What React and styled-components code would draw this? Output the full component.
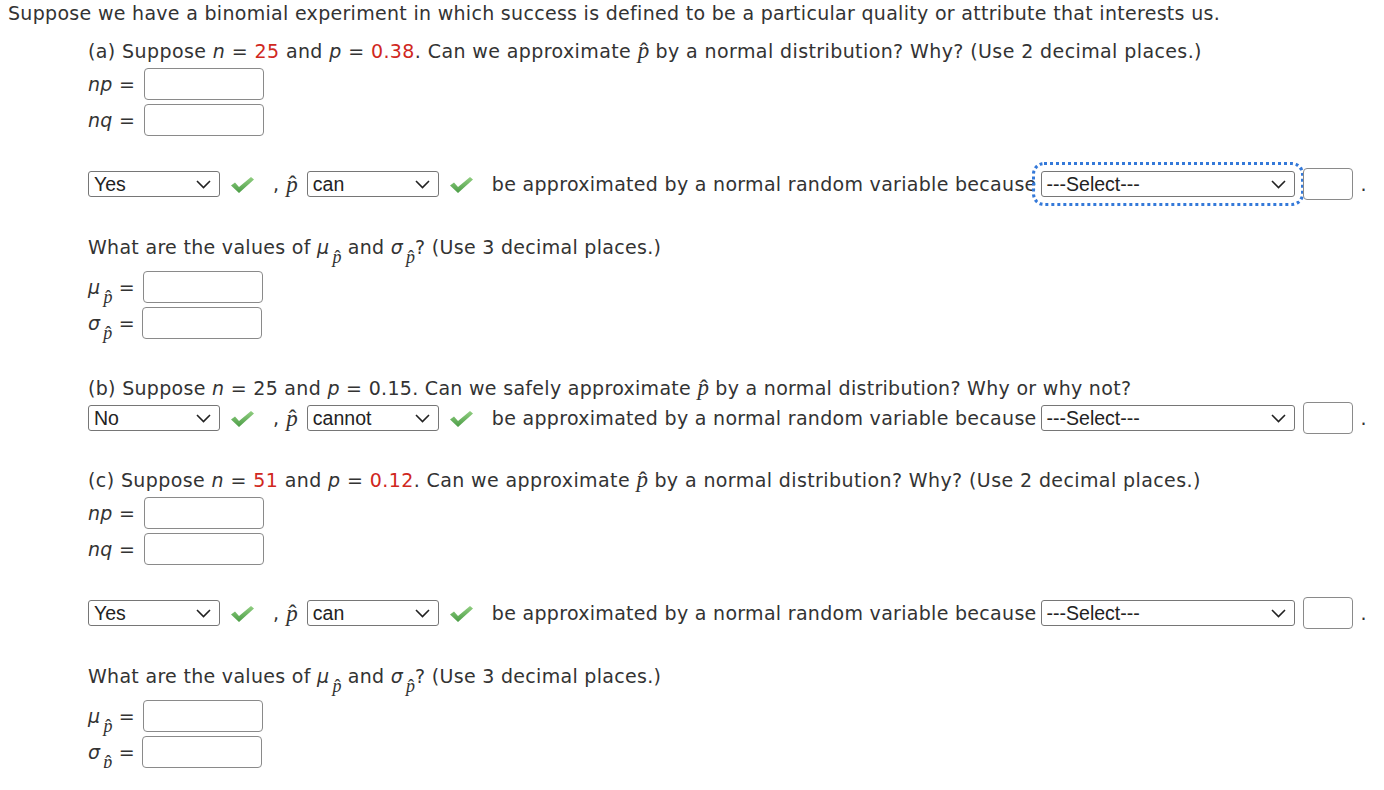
import React from 'react'
import styled, { createGlobalStyle } from 'styled-components'

const Global = createGlobalStyle`
  html, body { margin: 0; padding: 0; background: #fff; }
  body {
    font-family: "DejaVu Sans", Verdana, sans-serif;
    font-size: 19px;
    letter-spacing: 0.3px;
    color: #333;
  }
`;

const Page = styled.div`
  padding: 0 8px;
  width: 1384px;
  box-sizing: border-box;
`;

const Line = styled.div`
  height: 26px;
  line-height: 26px;
  white-space: nowrap;
  margin-top: ${p => p.$mt || 0}px;
  letter-spacing: ${p => p.$ls || 0.3}px;
`;

const Part = styled.div`
  padding-left: 80px;
`;

const Red = styled.span`
  color: #d0281e;
`;

const Var = styled.span`
  font-style: italic;
`;

const Hat = styled.span`
  position: relative;
  display: inline-block;
  font-family: "Liberation Serif", "Times New Roman", serif;
  font-style: italic;
  font-size: ${p => p.$size || 23}px;
  letter-spacing: 0;
  line-height: 1;
  &::after {
    content: "ˆ";
    position: absolute;
    left: 55%;
    top: 0.04em;
    transform: translateX(-50%);
    font-style: normal;
  }
`;

const Sym = styled.span`
  font-style: italic;
  display: inline-flex;
  align-items: baseline;
`;

const Sub = styled.span`
  display: inline-block;
  position: relative;
  top: 0.45em;
  margin-left: 3px;
`;

const InputRow = styled.div`
  display: flex;
  align-items: center;
  height: 32px;
  margin-top: ${p => p.$mt || 4}px;
`;

const Label = styled.span`
  width: ${p => p.$w || 56}px;
  white-space: nowrap;
`;

const Box = styled.div`
  width: ${p => p.$w || 120}px;
  height: 32px;
  box-sizing: border-box;
  border: 1px solid #8a8a8a;
  border-radius: 4px;
  background: #fff;
  flex-shrink: 0;
`;

const ChoiceRow = styled.div`
  display: flex;
  align-items: center;
  height: 32px;
  margin-top: ${p => p.$mt || 0}px;
  white-space: nowrap;
`;

const Select = styled.div`
  width: ${p => p.$w}px;
  height: 26px;
  box-sizing: border-box;
  border: 1px solid #767676;
  border-radius: 3px;
  display: flex;
  align-items: center;
  justify-content: space-between;
  padding: 0 8px 0 5px;
  font-family: "Liberation Sans", Arial, sans-serif;
  font-size: 19.5px;
  letter-spacing: 0;
  color: #222;
  flex-shrink: 0;
  outline: ${p => (p.$focus ? '3px dotted #3479d9' : 'none')};
  outline-offset: 6px;
`;

const Check = styled.span`
  display: inline-flex;
  margin-left: 9px;
  width: 26px;
`;

const Comma = styled.span`
  margin-left: 18px;
  margin-right: 9px;
  display: inline-flex;
  align-items: center;
  gap: 7px;
`;

const Because = styled.span`
  margin-left: 18px;
  margin-right: 4px;
`;

const Tail = styled.span`
  margin-left: 8px;
  display: inline-flex;
  align-items: center;
  gap: 8px;
`;

function Chevron() {
  return (
    <svg width="15" height="9" viewBox="0 0 15 9">
      <path d="M1 1 L7.5 7.5 L14 1" fill="none" stroke="#222" strokeWidth="1.6" />
    </svg>
  );
}

function Tick() {
  return (
    <svg width="26" height="22" viewBox="0 0 26 22">
      <defs>
        <linearGradient id="g" x1="0" y1="0" x2="0" y2="1">
          <stop offset="0" stopColor="#92cf82" />
          <stop offset="1" stopColor="#4a9c45" />
        </linearGradient>
      </defs>
      <path d="M2 12.5 L6 9.5 L10 14 L22 4 L25 6.5 L10 20 Z" fill="url(#g)" />
    </svg>
  );
}

function Drop({ w, text, focus }) {
  return (
    <Select $w={w} $focus={focus}>
      <span>{text}</span>
      <Chevron />
    </Select>
  );
}

const P = () => <Hat>p</Hat>;

function Choice({ first, second, focus, mt }) {
  return (
    <ChoiceRow $mt={mt}>
      <Drop w={132} text={first} />
      <Check><Tick /></Check>
      <Comma>, <P /></Comma>
      <Drop w={132} text={second} />
      <Check><Tick /></Check>
      <Because>be approximated by a normal random variable because</Because>
      <Drop w={254} text="---Select---" focus={focus} />
      <Tail>
        <Box $w={50} />
        <span>.</span>
      </Tail>
    </ChoiceRow>
  );
}

function Mu() {
  return <Sym>μ<Sub><Hat $size={18}>p</Hat></Sub></Sym>;
}

function Sigma() {
  return <Sym>σ<Sub><Hat $size={18}>p</Hat></Sub></Sym>;
}

function MeanSd({ mt }) {
  return (
    <>
      <Line $mt={mt}>
        What are the values of <Mu /> and <Sigma />? (Use 3 decimal places.)
      </Line>
      <InputRow $mt={11}>
        <Label $w={55}><Mu /> =</Label>
        <Box />
      </InputRow>
      <InputRow>
        <Label $w={54}><Sigma /> =</Label>
        <Box />
      </InputRow>
    </>
  );
}

function NpNq() {
  return (
    <>
      <InputRow>
        <Label><Var>np</Var> =</Label>
        <Box />
      </InputRow>
      <InputRow>
        <Label><Var>nq</Var> =</Label>
        <Box />
      </InputRow>
    </>
  );
}

export default function App() {
  return (
    <Page>
      <Global />
      <Line>
        Suppose we have a binomial experiment in which success is defined to be a particular quality or attribute that interests us.
      </Line>
      <Part>
        <Line $mt={12} $ls={0.4}>
          (a) Suppose <Var>n</Var> = <Red>25</Red> and <Var>p</Var> = <Red>0.38</Red>. Can we approximate <P /> by a normal distribution? Why? (Use 2 decimal places.)
        </Line>
        <NpNq />
        <Choice first="Yes" second="can" focus mt={32} />
        <MeanSd mt={34} />

        <Line $mt={36}>
          (b) Suppose <Var>n</Var> = 25 and <Var>p</Var> = 0.15. Can we safely approximate <P /> by a normal distribution? Why or why not?
        </Line>
        <Choice first="No" second="cannot" mt={1} />

        <Line $mt={33} $ls={0.4}>
          (c) Suppose <Var>n</Var> = <Red>51</Red> and <Var>p</Var> = <Red>0.12</Red>. Can we approximate <P /> by a normal distribution? Why? (Use 2 decimal places.)
        </Line>
        <NpNq />
        <Choice first="Yes" second="can" mt={32} />
        <MeanSd mt={34} />
      </Part>
    </Page>
  );
}
